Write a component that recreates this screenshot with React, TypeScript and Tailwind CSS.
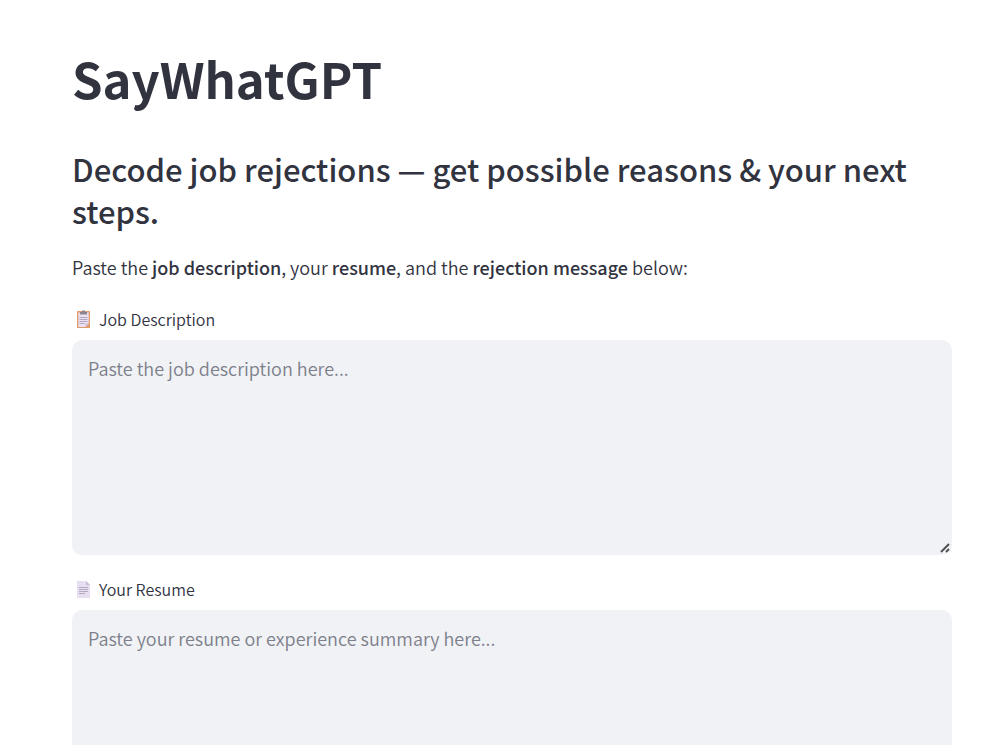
import type { ReactNode } from 'react'

type FieldProps = {
  id: string
  label: string
  placeholder: string
  icon: ReactNode
}

function ClipboardIcon() {
  return (
    <svg className="h-5 w-5 shrink-0" viewBox="0 0 20 20" aria-hidden="true">
      <rect x="3" y="2" width="13" height="17" rx="0.5" fill="#e39a6c" />
      <path d="M4.3 3.5h10.4v11L11.5 18H4.3z" fill="#e9e0f2" />
      <path d="M11.5 18v-3.5h3.2z" fill="#cdbdd9" />
      <path d="M6 3h2V1.6h3V3h2v2.5H6z" fill="#8b8591" />
      <path d="M5.5 8.5h8M5.5 10.5h8M5.5 12.5h8M5.5 14.5h5" stroke="#b4a7c2" />
    </svg>
  )
}

function PageIcon() {
  return (
    <svg className="h-5 w-5 shrink-0" viewBox="0 0 20 20" aria-hidden="true">
      <path d="M3 2h9l4 4v13H3z" fill="#e7def1" />
      <path d="M12 2v4h4z" fill="#c9bad6" />
      <path d="M5 8.5h9M5 10.5h9M5 12.5h9M5 14.5h6" stroke="#b6a9c1" />
    </svg>
  )
}

function ResizeGrip() {
  return (
    <svg
      className="pointer-events-none absolute right-0.5 bottom-0.5 h-2.5 w-2.5"
      viewBox="0 0 10 10"
      aria-hidden="true"
    >
      <path d="M1 9l8-8M6 9l3-3" fill="none" stroke="#505050" strokeWidth="1.9" />
    </svg>
  )
}

function Field({ id, label, placeholder, icon }: FieldProps) {
  return (
    <div>
      <label htmlFor={id} className="mb-[10px] flex h-[22px] items-center gap-[5px] pl-0.5 text-base">
        {icon}
        {label}
      </label>
      <div className="relative">
        <textarea
          id={id}
          placeholder={placeholder}
          className="block h-[215px] w-full rounded-[10px] bg-[#f0f2f6] p-4 text-lg leading-6 outline-none placeholder:text-[#7d7f8a] [&::-webkit-resizer]:hidden"
        />
        <ResizeGrip />
      </div>
    </div>
  )
}

export default function App() {
  return (
    <main className="bg-white pt-12 pr-[51px] pb-12 pl-[72px] font-['Noto_Sans_CJK_SC','Noto_Sans',sans-serif] font-[350] text-[#31333f]">
      <h1 className="text-[49px] leading-[60px] font-bold">SayWhatGPT</h1>
      <h2 className="mt-10 text-[31px] leading-[42px] font-medium">
        Decode job rejections — get possible reasons &amp; your next steps.
      </h2>
      <p className="mt-5 text-lg leading-[30px]">
        Paste the <strong className="font-medium">job description</strong>, your{' '}
        <strong className="font-medium">resume</strong>, and the{' '}
        <strong className="font-medium">rejection message</strong> below:
      </p>
      <form className="mt-[26px] flex flex-col gap-[23px]">
        <Field
          id="job-description"
          label="Job Description"
          placeholder="Paste the job description here..."
          icon={<ClipboardIcon />}
        />
        <Field
          id="resume"
          label="Your Resume"
          placeholder="Paste your resume or experience summary here..."
          icon={<PageIcon />}
        />
      </form>
    </main>
  )
}
